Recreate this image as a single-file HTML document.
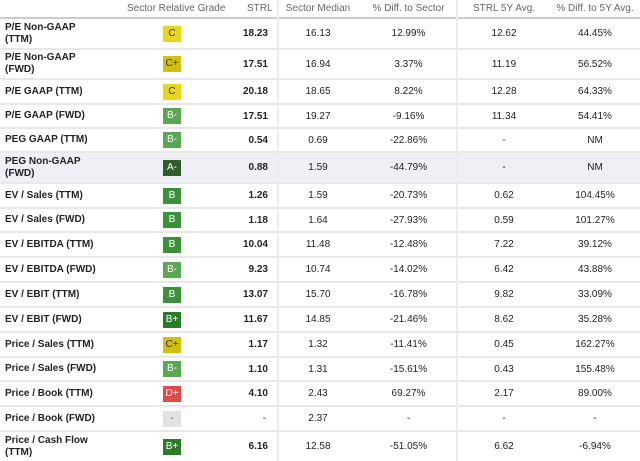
<!DOCTYPE html>
<html><head><style>
body{margin:0;width:640px;height:461px;background:#fff;font-family:"Liberation Sans",Arial,sans-serif;font-size:10px;color:#222;overflow:hidden;position:relative}
.r{position:absolute;left:0;width:640px;border-bottom:2px solid #e8e8e8;box-sizing:border-box}
.r div{position:absolute;top:0;height:100%;display:flex;align-items:center}
.l{left:5px;font-weight:bold;line-height:12px;color:#222}
.s{right:372px;font-weight:bold}
.m{left:278px;width:80px;justify-content:center}
.d{left:360px;width:97px;justify-content:center}
.a{left:458px;width:92px;justify-content:center}
.p{left:550px;width:90px;justify-content:center}
.g{left:163px;width:18px}
.g span{display:block;width:18px;height:16px;line-height:16px;text-align:center;font-size:10px;color:#fff;box-sizing:border-box}
.h{color:#666;font-weight:normal}
.vl{position:absolute;top:0;width:2px;height:461px;background:#ececec;z-index:2}
</style></head><body>
<div class="vl" style="left:277px"></div><div class="vl" style="left:456px"></div>
<div class="r" style="top:0;height:19px;border-bottom:2px solid #ccc">
<div class="h" style="left:127px">Sector Relative Grade</div>
<div class="h" style="left:247px">STRL</div>
<div class="h m" style="">Sector Median</div>
<div class="h d">% Diff. to Sector</div>
<div class="h a">STRL 5Y Avg.</div>
<div class="h p">% Diff. to 5Y Avg.</div>
</div>
<div class="r" style="top:19px;height:31px"><div class="l">P/E Non-GAAP<br>(TTM)</div><div class="g"><span style="background:#e8d61c;color:#333">C</span></div><div class="s">18.23</div><div class="m">16.13</div><div class="d">12.99%</div><div class="a">12.62</div><div class="p">44.45%</div></div>
<div class="r" style="top:50px;height:30px"><div class="l">P/E Non-GAAP<br>(FWD)</div><div class="g"><span style="background:#d2c010;color:#333">C+</span></div><div class="s">17.51</div><div class="m">16.94</div><div class="d">3.37%</div><div class="a">11.19</div><div class="p">56.52%</div></div>
<div class="r" style="top:80px;height:25px"><div class="l">P/E GAAP (TTM)</div><div class="g"><span style="background:#e8d61c;color:#333">C</span></div><div class="s">20.18</div><div class="m">18.65</div><div class="d">8.22%</div><div class="a">12.28</div><div class="p">64.33%</div></div>
<div class="r" style="top:105px;height:24px"><div class="l">P/E GAAP (FWD)</div><div class="g"><span style="background:#5aa653">B-</span></div><div class="s">17.51</div><div class="m">19.27</div><div class="d">-9.16%</div><div class="a">11.34</div><div class="p">54.41%</div></div>
<div class="r" style="top:129px;height:24px"><div class="l">PEG GAAP (TTM)</div><div class="g"><span style="background:#5aa653">B-</span></div><div class="s">0.54</div><div class="m">0.69</div><div class="d">-22.86%</div><div class="a">-</div><div class="p">NM</div></div>
<div class="r" style="top:153px;height:31px;background:#eef0f5"><div class="l">PEG Non-GAAP<br>(FWD)</div><div class="g"><span style="background:#2e5e2c">A-</span></div><div class="s">0.88</div><div class="m">1.59</div><div class="d">-44.79%</div><div class="a">-</div><div class="p">NM</div></div>
<div class="r" style="top:184px;height:25px"><div class="l">EV / Sales (TTM)</div><div class="g"><span style="background:#3d8f3a">B</span></div><div class="s">1.26</div><div class="m">1.59</div><div class="d">-20.73%</div><div class="a">0.62</div><div class="p">104.45%</div></div>
<div class="r" style="top:209px;height:24px"><div class="l">EV / Sales (FWD)</div><div class="g"><span style="background:#3d8f3a">B</span></div><div class="s">1.18</div><div class="m">1.64</div><div class="d">-27.93%</div><div class="a">0.59</div><div class="p">101.27%</div></div>
<div class="r" style="top:233px;height:25px"><div class="l">EV / EBITDA (TTM)</div><div class="g"><span style="background:#3d8f3a">B</span></div><div class="s">10.04</div><div class="m">11.48</div><div class="d">-12.48%</div><div class="a">7.22</div><div class="p">39.12%</div></div>
<div class="r" style="top:258px;height:25px"><div class="l">EV / EBITDA (FWD)</div><div class="g"><span style="background:#5aa653">B-</span></div><div class="s">9.23</div><div class="m">10.74</div><div class="d">-14.02%</div><div class="a">6.42</div><div class="p">43.88%</div></div>
<div class="r" style="top:283px;height:25px"><div class="l">EV / EBIT (TTM)</div><div class="g"><span style="background:#3d8f3a">B</span></div><div class="s">13.07</div><div class="m">15.70</div><div class="d">-16.78%</div><div class="a">9.82</div><div class="p">33.09%</div></div>
<div class="r" style="top:308px;height:25px"><div class="l">EV / EBIT (FWD)</div><div class="g"><span style="background:#2a7a28">B+</span></div><div class="s">11.67</div><div class="m">14.85</div><div class="d">-21.46%</div><div class="a">8.62</div><div class="p">35.28%</div></div>
<div class="r" style="top:333px;height:25px"><div class="l">Price / Sales (TTM)</div><div class="g"><span style="background:#d2c010;color:#333">C+</span></div><div class="s">1.17</div><div class="m">1.32</div><div class="d">-11.41%</div><div class="a">0.45</div><div class="p">162.27%</div></div>
<div class="r" style="top:358px;height:24px"><div class="l">Price / Sales (FWD)</div><div class="g"><span style="background:#5aa653">B-</span></div><div class="s">1.10</div><div class="m">1.31</div><div class="d">-15.61%</div><div class="a">0.43</div><div class="p">155.48%</div></div>
<div class="r" style="top:382px;height:25px"><div class="l">Price / Book (TTM)</div><div class="g"><span style="background:#e04a4a">D+</span></div><div class="s">4.10</div><div class="m">2.43</div><div class="d">69.27%</div><div class="a">2.17</div><div class="p">89.00%</div></div>
<div class="r" style="top:407px;height:25px"><div class="l">Price / Book (FWD)</div><div class="g"><span style="background:#e2e2e2;color:#555">-</span></div><div class="s" style="right:374px;font-weight:normal">-</div><div class="m">2.37</div><div class="d">-</div><div class="a">-</div><div class="p">-</div></div>
<div class="r" style="top:432px;height:29px;border:none"><div class="l">Price / Cash Flow<br>(TTM)</div><div class="g"><span style="background:#2a7a28">B+</span></div><div class="s">6.16</div><div class="m">12.58</div><div class="d">-51.05%</div><div class="a">6.62</div><div class="p">-6.94%</div></div>
</body></html>
